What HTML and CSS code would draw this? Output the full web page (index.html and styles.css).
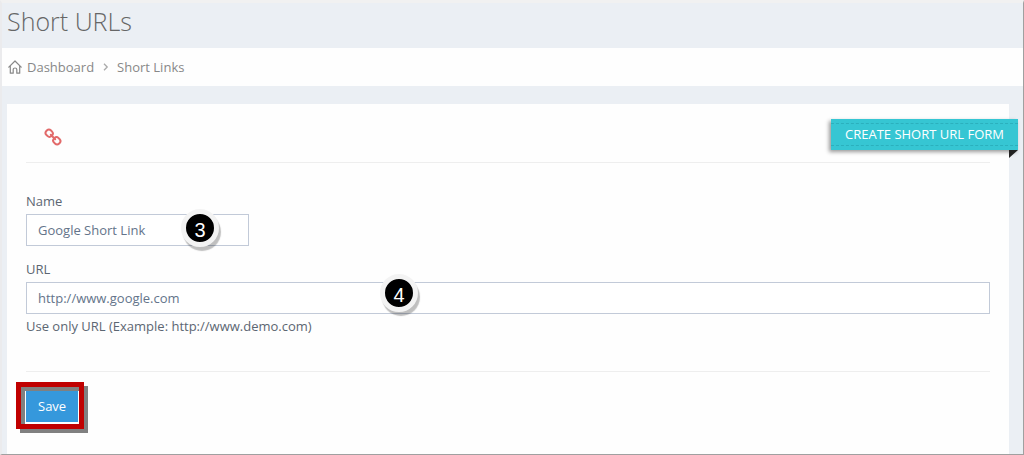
FILE: index.html
```html
<!DOCTYPE html>
<html lang="en">
<head>
<meta charset="utf-8">
<title>Short URLs</title>
<link rel="stylesheet" href="styles.css">
</head>
<body>
<div class="page">
  <h1 class="title">Short URLs</h1>
  <nav class="breadcrumb" aria-label="Breadcrumb">
    <svg class="home" viewBox="0 0 14 14" fill="none" stroke="currentColor" stroke-width="1.2" stroke-linejoin="round" stroke-linecap="round"><path d="M.8 7.2 7 1l6.2 6.2M2.3 6v7.2h2.9V9.4Q5.2 8 7 8t1.8 1.4v3.8h2.9V6"/></svg>
    <a href="#">Dashboard</a>
    <svg class="chevron" viewBox="0 0 6 8" fill="none" stroke="currentColor" stroke-width="1.3"><path d="m1 .8 3.2 3.2L1 7.2"/></svg>
    <a href="#">Short Links</a>
  </nav>
  <main class="content">
    <section class="card">
      <header class="card-head">
        <svg class="link" viewBox="0 0 18 18" fill="none" stroke="currentColor" stroke-width="2"><rect x="1.6" y="2" width="7.2" height="6.4" rx="3" transform="rotate(45 5.2 5.2)"/><rect x="9.2" y="9.6" width="7.2" height="6.4" rx="3" transform="rotate(45 12.8 12.8)"/><path d="m6.8 6.8 4.4 4.4" stroke-linecap="round"/></svg>
        <h2 class="ribbon">CREATE SHORT URL FORM</h2>
      </header>
      <form class="form">
        <div class="field field-name">
          <label for="name">Name</label>
          <input id="name" type="text" value="Google Short Link">
          <span class="step step-name">3</span>
        </div>
        <div class="field">
          <label for="url">URL</label>
          <input id="url" type="text" value="http://www.google.com" aria-describedby="url-help">
          <span class="step step-url">4</span>
        </div>
        <p class="help" id="url-help">Use only URL (Example: http://www.demo.com)</p>
        <div class="actions">
          <div class="highlight">
            <button class="save" type="button">Save</button>
          </div>
        </div>
      </form>
    </section>
  </main>
</div>
</body>
</html>
```
FILE: styles.css
```css
* { box-sizing: border-box; }
body {
  margin: 0;
  font: 13px/18px "Open Sans", sans-serif;
  color: #5c6672;
}
.page {
  display: flex;
  flex-direction: column;
  min-height: 100vh;
  background: #ebeff4;
  border: solid #a0a0a0;
  border-width: 3px 1px 1px 2px;
  border-top-color: #f1f1f1;
  border-left-color: #ebebed;
}
.title {
  margin: 0;
  padding: 0 5px 9px;
  font-size: 25px;
  line-height: 36px;
  font-weight: 300;
  color: #666;
}
.breadcrumb {
  display: flex;
  align-items: center;
  height: 38px;
  padding: 0 6px;
  background: #fefefe;
  color: #888;
}
.breadcrumb a { color: inherit; text-decoration: none; }
.home { width: 14px; height: 14px; margin-right: 5px; }
.chevron { width: 6px; height: 8px; margin: 0 8px 0 9px; color: #aaa; }
.content {
  flex: 1;
  display: flex;
  padding: 18px 14px 0 5px;
}
.card {
  flex: 1;
  padding: 15px 19px 25px;
  background: #fefefe;
}
.card-head {
  display: flex;
  justify-content: space-between;
  align-items: flex-start;
  height: 44px;
  border-bottom: 1px solid #eee;
  padding-left: 18px;
}
.link { width: 18px; height: 18px; margin-top: 9px; color: #e26a6a; }
.ribbon {
  position: relative;
  margin: 0 -28px 0 0;
  padding: 0 14px;
  font-size: 13px;
  line-height: 31px;
  font-weight: 400;
  color: #fff;
  background: #36c6d3;
  box-shadow: -2px 2px 4px rgba(0, 0, 0, .4);
}
.ribbon::before {
  content: "";
  position: absolute;
  inset: 4px 0;
  border: dashed #2bb0bd;
  border-width: 1px 0;
}
.ribbon::after {
  content: "";
  position: absolute;
  top: 100%;
  right: 0;
  border: 0 solid transparent;
  border-right-width: 9px;
  border-top: 8px solid #222;
}
.form { padding-top: 29px; }
.field {
  position: relative;
  display: flex;
  flex-direction: column;
  gap: 4px;
  margin-bottom: 14px;
}
.field + .field { margin-bottom: 3px; }
.field-name { width: 223px; }
.field input {
  width: 100%;
  height: 32px;
  padding: 0 11px;
  border: 1px solid #c2cad8;
  background: #fff;
  font: inherit;
  color: #64748a;
}
.step {
  position: absolute;
  width: 38px;
  height: 38px;
  border: 5px solid #f3f3f3;
  border-radius: 50%;
  background: #000;
  box-shadow: 2px 4px 1px rgba(0, 0, 0, .25);
  color: #fff;
  font: 20px/32px "Liberation Sans", sans-serif;
  text-align: center;
}
.step-name { left: 155px; bottom: -1px; }
.step-url { left: 354px; bottom: 2px; }
.help { margin: 0 0 36px; }
.actions {
  padding-top: 18px;
  border-top: 1px solid #eee;
}
.highlight {
  position: relative;
  width: fit-content;
}
.highlight::after {
  content: "";
  position: absolute;
  inset: -8px -6px -7px -10px;
  border: 5px solid #c00000;
  box-shadow: 4px 4px 0 #808080, inset 4px 4px 0 #808080;
  pointer-events: none;
}
.save {
  display: block;
  height: 32px;
  padding: 0 12px;
  border: 0;
  background: #3598dc;
  color: #fff;
  font: inherit;
}
```
